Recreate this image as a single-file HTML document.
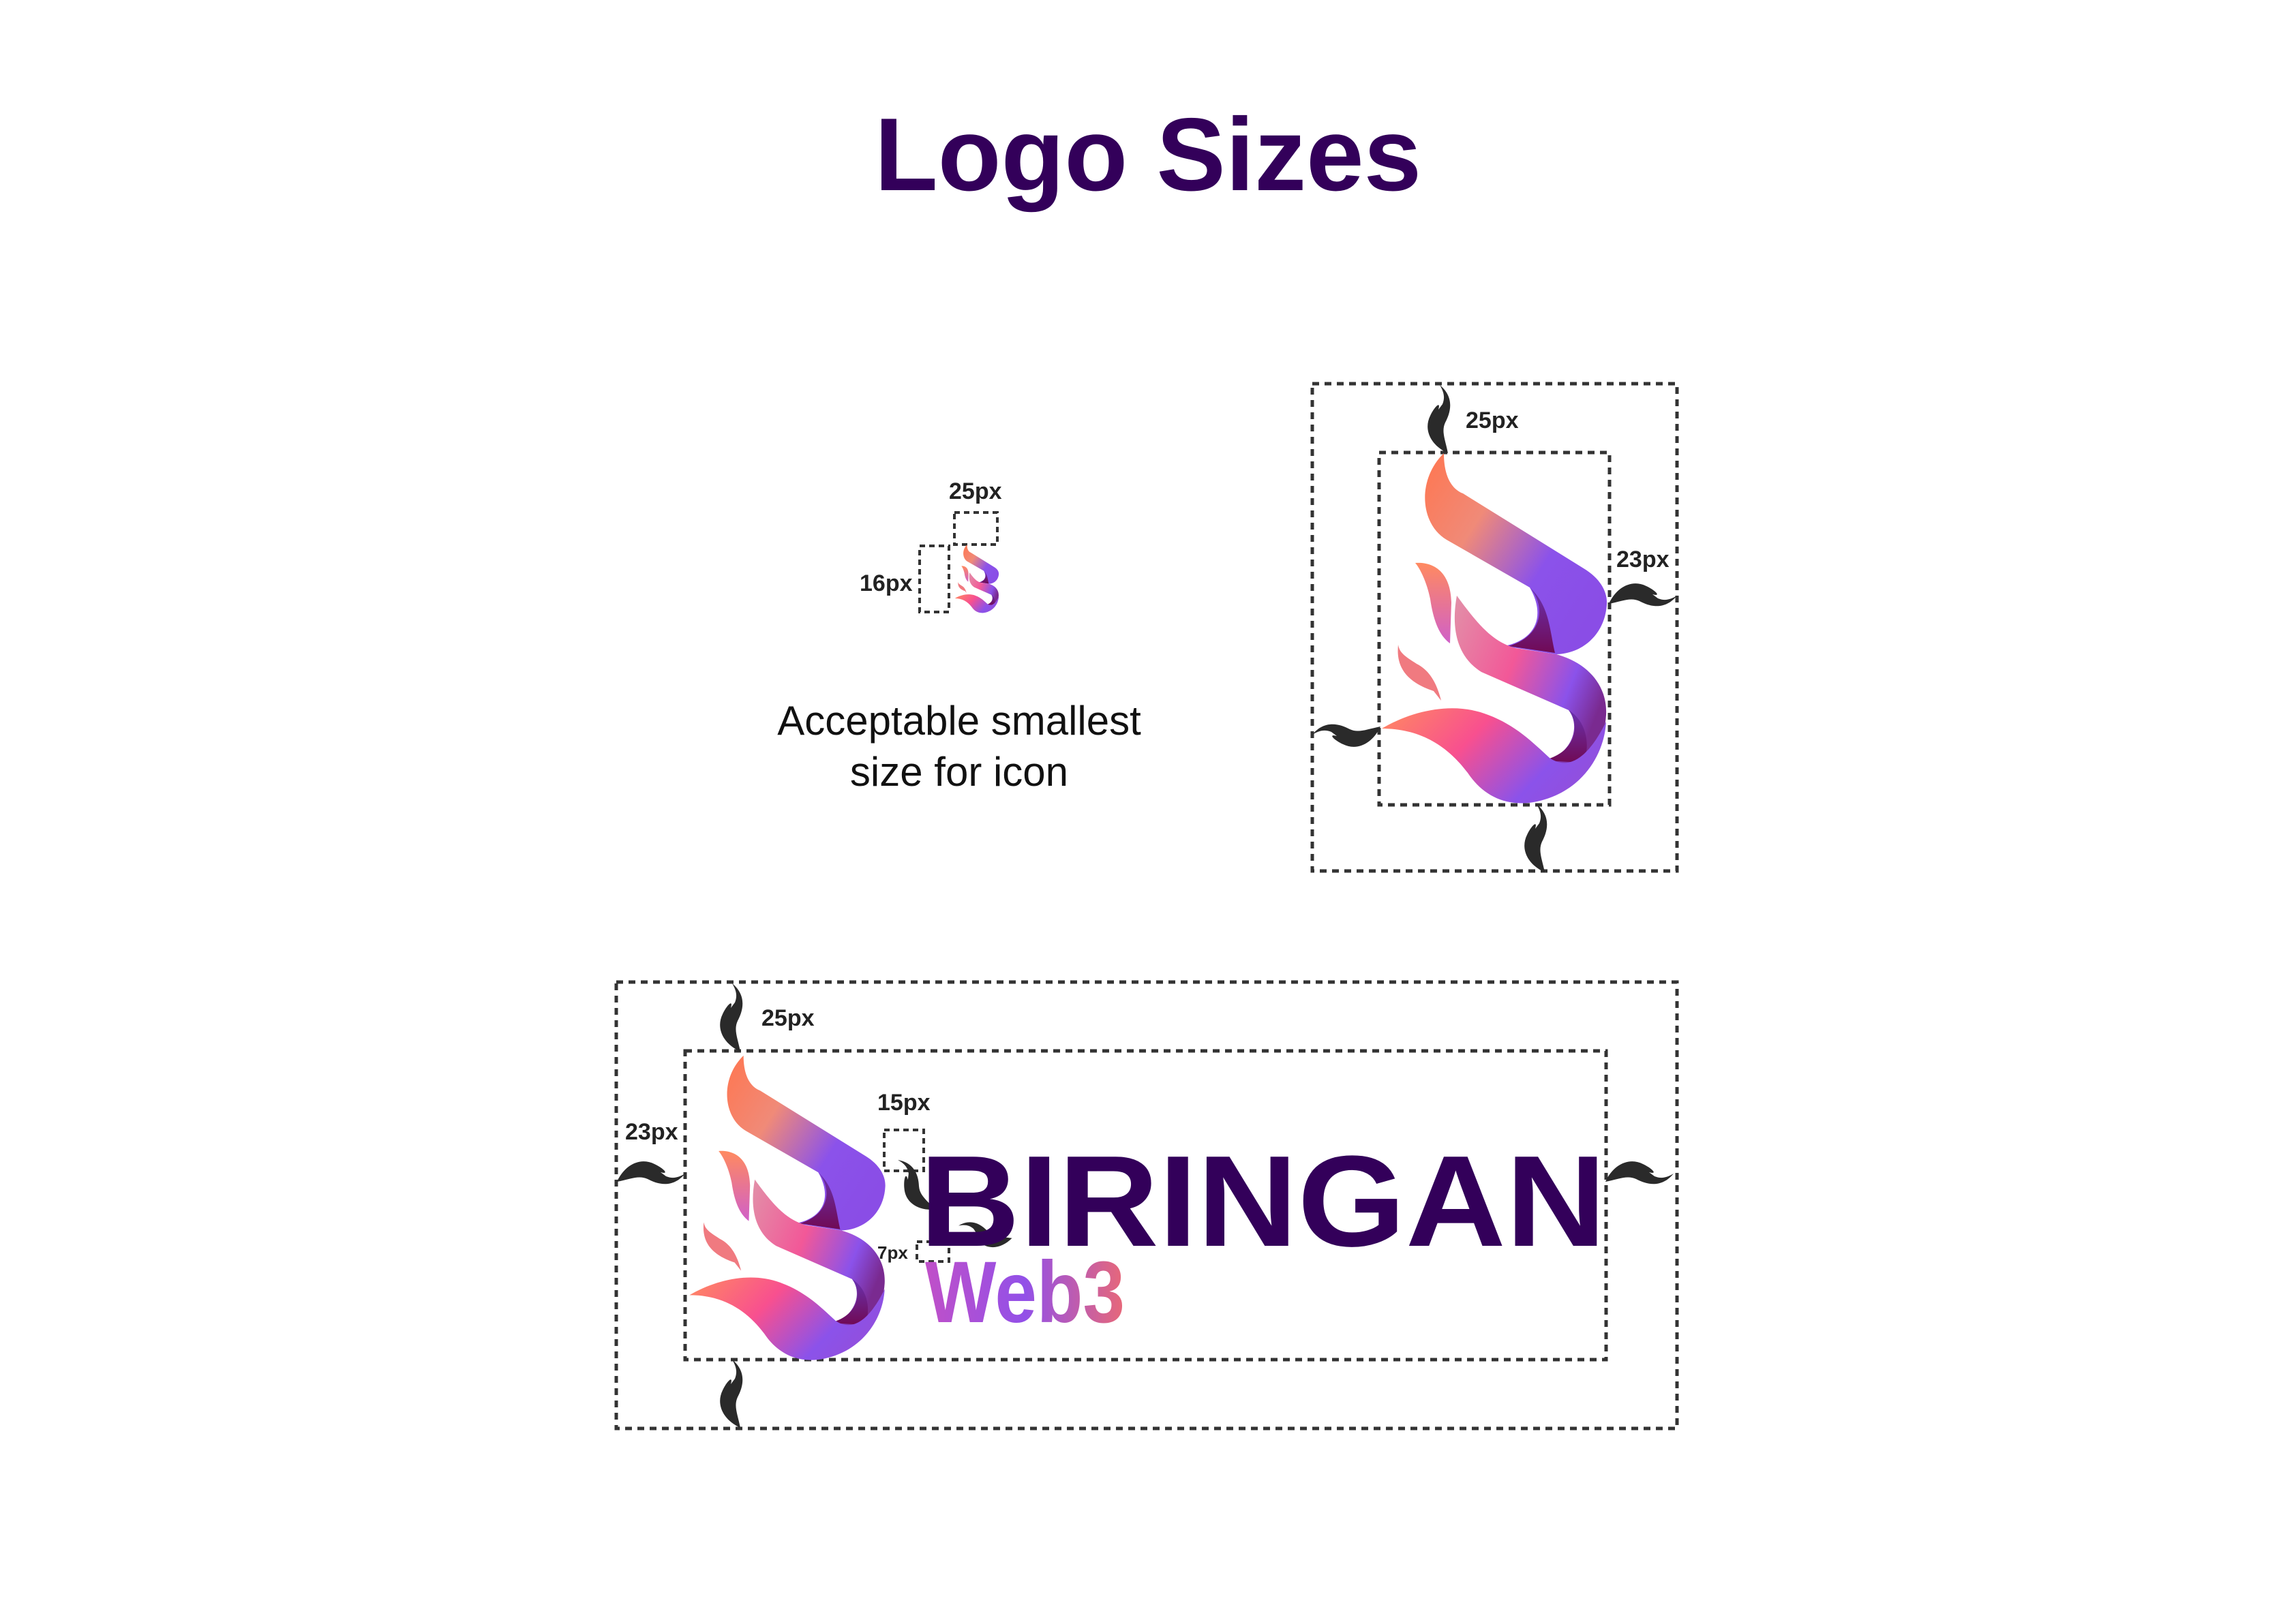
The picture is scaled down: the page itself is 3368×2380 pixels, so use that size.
<!DOCTYPE html>
<html><head><meta charset="utf-8"><style>
html,body{margin:0;padding:0;background:#fff;}
svg{display:block}
text{font-family:"Liberation Sans",sans-serif}
</style></head><body>
<svg width="3368" height="2380" viewBox="0 0 3368 2380" xmlns="http://www.w3.org/2000/svg">
<defs>
<linearGradient id="gU" x1="0" y1="0" x2="1" y2="0.7">
<stop offset="0" stop-color="#ff7650"/><stop offset="0.35" stop-color="#f08a78"/><stop offset="0.7" stop-color="#8b52ea"/><stop offset="1" stop-color="#8a4de6"/></linearGradient>
<linearGradient id="gM" x1="0" y1="0" x2="1" y2="0.5">
<stop offset="0" stop-color="#e290a8"/><stop offset="0.45" stop-color="#f25898"/><stop offset="0.8" stop-color="#8b52ea"/><stop offset="1" stop-color="#7a2a90"/></linearGradient>
<linearGradient id="gB" x1="0" y1="0" x2="1" y2="0.4">
<stop offset="0" stop-color="#ff8a60"/><stop offset="0.45" stop-color="#f8508f"/><stop offset="0.85" stop-color="#8b52ea"/><stop offset="1" stop-color="#9050e0"/></linearGradient>
<linearGradient id="gD" x1="0" y1="0" x2="0" y2="1">
<stop offset="0" stop-color="#6a32b0"/><stop offset="1" stop-color="#700a55"/></linearGradient>
<linearGradient id="gL" x1="0" y1="0" x2="0" y2="1">
<stop offset="0" stop-color="#ff8a60"/><stop offset="1" stop-color="#d060c8"/></linearGradient>
<linearGradient id="gW" x1="0" y1="0" x2="1" y2="0">
<stop offset="0" stop-color="#c050c8"/><stop offset="0.5" stop-color="#9250e8"/><stop offset="1" stop-color="#e86878"/></linearGradient>
<g id="logo">
<path d="M95,1 C95,40 110,55 123,60 L300,170 C325,185 335,205 334,222 C332,265 300,295 260,296 L183,284 C230,275 245,240 221,198 L99,128 C60,105 55,40 95,1 Z" fill="url(#gU)"/>
<path d="M221,198 C245,225 240,270 190,284 L258,294 C250,260 250,225 221,198 Z" fill="url(#gD)"/>
<path d="M114,210 C150,260 170,278 200,287 L260,296 C310,310 335,345 333,385 C330,430 310,470 270,490 L255,449 C290,430 292,395 278,378 L150,322 C115,300 105,260 114,210 Z" fill="url(#gM)"/>
<path d="M278,378 C295,400 290,440 240,452 L300,455 C310,430 305,395 278,378 Z" fill="url(#gD)"/>
<path d="M4,405 C50,378 110,365 160,385 C200,400 225,425 250,448 C270,462 300,462 333,395 C330,450 290,505 220,514 C180,518 150,500 130,470 C100,430 60,405 4,405 Z" fill="url(#gB)"/>
<path d="M53,162 C80,160 105,175 106,220 L104,280 C90,270 80,250 75,215 C70,190 60,170 53,162 Z" fill="url(#gL)"/>
<path d="M28,282 C25,310 35,335 80,350 L91,364 C85,340 75,320 55,310 C40,300 30,295 28,282 Z" fill="#f07a80"/>
</g>
<path id="arr" d="M22,0 C44,18 38,40 30,55 C24,68 30,80 34,100 C8,88 -2,65 8,45 C14,32 24,22 20,36 L26,28 C30,18 28,10 22,0 Z" fill="#2a2a2a"/>
</defs>

<text x="1684" y="279" text-anchor="middle" font-size="152" font-weight="bold" fill="#33005a">Logo Sizes</text>

<g fill="none" stroke="#333" stroke-width="5" stroke-dasharray="10 8">
<rect x="1925" y="563" width="535" height="715"/>
<rect x="2023" y="664" width="338" height="517"/>
<rect x="904" y="1441" width="1556" height="655"/>
<rect x="1005" y="1542" width="1351" height="453"/>
<rect x="1349" y="801" width="43" height="97" stroke-width="4" stroke-dasharray="8 6"/>
<rect x="1400" y="752" width="63" height="47" stroke-width="4" stroke-dasharray="8 6"/>
<rect x="1297" y="1658" width="58" height="60" stroke-width="4" stroke-dasharray="8 6"/>
<rect x="1345" y="1822" width="47" height="29" stroke-width="4" stroke-dasharray="8 6"/>
</g>

<use href="#logo" transform="translate(2023,664)"/>
<use href="#logo" transform="translate(1008,1548) scale(0.87)"/>
<use href="#logo" transform="translate(1400,799) scale(0.195)"/>

<use href="#arr" transform="translate(2090,565)"/>
<use href="#arr" transform="translate(2232,1180)"/>
<use href="#arr" transform="translate(2460,852) rotate(90)"/>
<use href="#arr" transform="translate(1925,1100) rotate(-90)"/>
<use href="#arr" transform="translate(1052,1443)"/>
<use href="#arr" transform="translate(1052,1995)"/>
<use href="#arr" transform="translate(1005,1700) rotate(90)"/>
<use href="#arr" transform="translate(2455,1700) rotate(90)"/>
<use href="#arr" transform="translate(1300,1712) scale(0.9) rotate(-30)"/>
<use href="#arr" transform="translate(1400,1815) scale(0.8) rotate(-70)"/>

<g font-size="34" font-weight="bold" fill="#222">
<text x="2150" y="628">25px</text>
<text x="2371" y="832">23px</text>
<text x="1261" y="867">16px</text>
<text x="1392" y="732">25px</text>
<text x="1117" y="1505">25px</text>
<text x="917" y="1672">23px</text>
<text x="1287" y="1629">15px</text>
<text x="1287" y="1847" font-size="26">7px</text>
</g>

<text x="1407" y="1078" text-anchor="middle" font-size="60" fill="#111">Acceptable smallest</text>
<text x="1407" y="1153" text-anchor="middle" font-size="60" fill="#111">size for icon</text>

<text x="1349" y="1828" font-size="190" font-weight="bold" fill="#33005a" textLength="1007" lengthAdjust="spacingAndGlyphs">BIRINGAN</text>
<text x="1357" y="1940" font-size="128" font-weight="bold" fill="url(#gW)" textLength="293" lengthAdjust="spacingAndGlyphs">Web3</text>
</svg>
</body></html>
